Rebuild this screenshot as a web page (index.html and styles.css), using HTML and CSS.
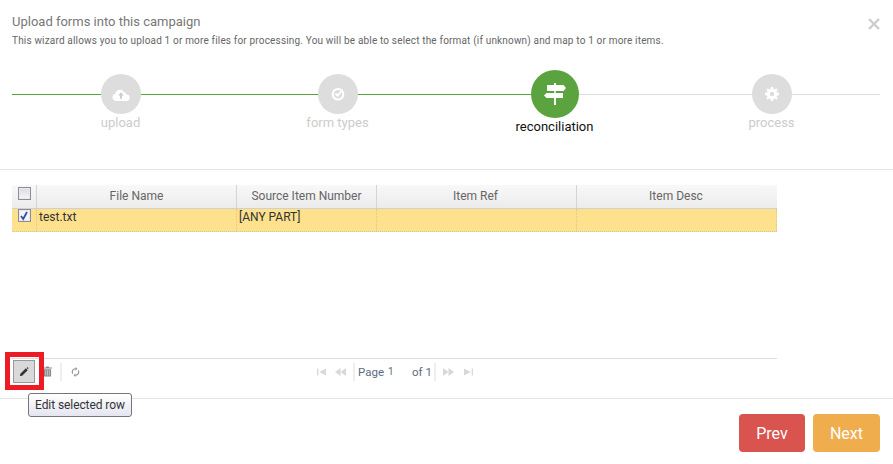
FILE: index.html
```html
<!DOCTYPE html>
<html lang="en">
<head>
<meta charset="utf-8">
<title>Upload forms</title>
<link rel="stylesheet" href="styles.css">
</head>
<body>
<div class="wizard">
  <header class="head">
    <div>
      <h1 class="title">Upload forms into this campaign</h1>
      <p class="sub">This wizard allows you to upload 1 or more files for processing. You will be able to select the format (if unknown) and map to 1 or more items.</p>
    </div>
    <svg class="close" viewBox="0 0 12 12" width="12" height="12"><path d="M1 1l10 10M11 1L1 11" stroke="#ccc" stroke-width="2.4" fill="none"/></svg>
  </header>
  <section class="stepper">
    <div class="track"><div class="track-done"></div></div>
    <div class="step">
      <div class="circle">
        <svg viewBox="0 0 18 13" width="18" height="13"><path d="M4 13A3.700 3.700 0 0 1 3.400 5.700 4.600 4.600 0 0 1 12 4.200 3.200 3.200 0 0 1 14.500 6.600 3.200 3.200 0 0 1 14.500 13Z" fill="#fff"/><path d="M9 4.200L6.200 7.400H8V10.800H10V7.400H11.800Z" fill="#ccc"/></svg>
      </div>
      <div class="label">upload</div>
    </div>
    <div class="step">
      <div class="circle">
        <svg viewBox="0 0 14 14" width="14" height="14"><circle cx="7" cy="7.300" r="5.300" fill="none" stroke="#fff" stroke-width="2"/><path d="M4.500 6.500L6.600 8.600 11.500 3" fill="none" stroke="#fff" stroke-width="1.800"/></svg>
      </div>
      <div class="label">form types</div>
    </div>
    <div class="step step-active">
      <div class="circle">
        <svg viewBox="0 0 22 22" width="22" height="22"><path d="M10 0h2v2h7.500L22 5l-2.500 3H12v2h7v5h-7v7h-2v-7H2.500L0 12.500 2.500 10H10V8H3V2h7z" fill="#fff"/><path d="M3 8.700h16v.6H3z" fill="#5ba33f"/></svg>
      </div>
      <div class="label">reconciliation</div>
    </div>
    <div class="step">
      <div class="circle">
        <svg viewBox="0 0 14 14" width="14" height="14"><path d="M5.800 0h2.400l.3 1.900 1.200.5L11.300 1.300 12.700 2.700 11.600 4.300l.5 1.200L14 5.800v2.400l-1.900.3-.5 1.200 1.100 1.600-1.400 1.400-1.600-1.100-1.200.5L8.200 14H5.800l-.3-1.900-1.200-.5-1.600 1.100-1.400-1.400 1.100-1.600-.5-1.200L0 8.200V5.800l1.900-.3.500-1.200L1.300 2.700 2.700 1.300l1.600 1.100 1.200-.5z M7 4.800a2.200 2.200 0 1 0 0 4.400 2.200 2.200 0 0 0 0-4.400z" fill="#fff" fill-rule="evenodd"/></svg>
      </div>
      <div class="label">process</div>
    </div>
  </section>
  <section class="content">
    <div class="grid">
      <div class="row row-head">
        <div class="cell cell-check"><span class="check"></span></div>
        <div class="cell">File Name</div>
        <div class="cell">Source Item Number</div>
        <div class="cell cell-shift">Item Ref</div>
        <div class="cell cell-shift">Item Desc</div>
      </div>
      <div class="row row-selected">
        <div class="cell cell-check"><span class="check check-on"><svg viewBox="0 0 10 10" width="10" height="10"><path d="M2 5l2.200 3L8 1" fill="none" stroke="#3a4fa0" stroke-width="1.800"/></svg></span></div>
        <div class="cell">test.txt</div>
        <div class="cell">[ANY PART]</div>
        <div class="cell"></div>
        <div class="cell"></div>
      </div>
    </div>
    <div class="pager">
      <div class="tools">
        <button class="edit-btn" type="button">
          <svg viewBox="0 0 12 12" width="11" height="11"><path d="M1 11l.5-2.500L7.500 2.500 9.500 4.500 3.500 10.500Z" fill="#333"/><path d="M9.500 0.800l.4 1 1 .4-1 .4-.4 1-.4-1-1-.4 1-.4z" fill="#333"/></svg>
        </button>
        <svg class="tool-trash" viewBox="0 0 10 11" width="9" height="11"><path d="M3.500 0h3v1H10v1.200H0V1h3.500z M1 3h8v8H1z" fill="#888"/><path d="M3 4v6M5 4v6M7 4v6" stroke="#e4e4e4" stroke-width=".7"/></svg>
        <span class="sep sep-tools"></span>
        <svg class="tool-refresh" viewBox="0 0 12 12" width="11" height="12"><path d="M6 2.500A3.500 3.500 0 0 0 3 8M6 9.500A3.500 3.500 0 0 0 9 4" fill="none" stroke="#888" stroke-width="1.100"/><path d="M6 .5V4.500L8 2.500Z M6 11.500V7.500L4 9.500Z" fill="#888"/></svg>
      </div>
      <div class="paging">
        <svg class="pg-first" viewBox="0 0 10 8" width="9" height="8"><path d="M0 0h1.500v8H0z M10 0v8L2.500 4z" fill="#d8d8d8"/></svg>
        <svg class="pg-prev" viewBox="0 0 11 8" width="11" height="8"><path d="M5.500 0v8L0 4z M11 0v8L5.500 4z" fill="#d8d8d8"/></svg>
        <span class="sep"></span>
        <span class="page-text">Page</span><span class="page-num">1</span><span class="page-of">of 1</span>
        <span class="sep sep-right"></span>
        <svg class="pg-next" viewBox="0 0 11 8" width="11" height="8"><path d="M0 0v8L5.500 4z M5.500 0v8L11 4z" fill="#d8d8d8"/></svg>
        <svg viewBox="0 0 10 8" width="9" height="8"><path d="M0 0v8L7.500 4z M8.500 0H10v8H8.500z" fill="#d8d8d8"/></svg>
      </div>
      <div class="edit-mark"></div>
      <div class="tooltip">Edit selected row</div>
    </div>
  </section>
  <footer class="foot">
    <button class="btn btn-prev" type="button">Prev</button>
    <button class="btn btn-next" type="button">Next</button>
  </footer>
</div>
</body>
</html>
```
FILE: styles.css
```css
* { box-sizing: border-box; }
html, body { margin: 0; height: 100%; background: #fff; overflow: hidden; }
body { font-family: Roboto, "Liberation Sans", sans-serif; color: #777; }
.wizard { width: 893px; height: 464px; display: flex; flex-direction: column; }

.head { height: 70px; padding: 14px 13px 0 12px; display: flex; justify-content: space-between; align-items: flex-start; }
.title { margin: 0; font-size: 13px; line-height: 15px; font-weight: 400; color: #777; }
.sub { margin: 6px 0 0; font-size: 10px; line-height: 12px; font-weight: 400; color: #666; letter-spacing: .17px; }
.close { margin-top: 4px; }

.stepper { position: relative; height: 99px; margin: 0 13px 0 12px; display: grid; grid-template-columns: repeat(4, 1fr); }
.track { position: absolute; left: 0; right: 0; top: 24px; height: 1px; background: #ddd; }
.track-done { width: 519px; height: 1px; background: #5aa33a; }
.step { position: relative; display: flex; flex-direction: column; align-items: center; padding-top: 4px; }
.circle { width: 40px; height: 40px; border-radius: 50%; background: #ddd; display: flex; align-items: center; justify-content: center; }
.label { margin-top: 1px; font-size: 13px; line-height: 16px; color: #ccc; }
.step-active { padding-top: 0; }
.step-active .circle { width: 48px; height: 48px; background: #5ba33f; }
.step-active .label { margin-top: 1px; color: #111; font-size: 13px; }

.content { border-top: 1px solid #e5e5e5; height: 229px; padding: 15px 116px 0 12px; position: relative; }
.grid { height: 173px; }
.row { display: grid; grid-template-columns: 25px 200px 140px 200px 200px; font-size: 12px; }
.cell { padding: 0 2px; overflow: hidden; white-space: nowrap; }
.row-head { height: 24px; line-height: 22px; background: linear-gradient(#f8f8f8, #ececec); border-bottom: 1px solid #d0d0d0; text-align: center; color: #666; }
.row-head .cell { border-right: 1px solid #d4d4d4; }
.row-head .cell:last-child { border-right: 0; }
.row-head .cell-shift { padding-right: 4px; }
.row-selected { height: 23px; line-height: 17px; background: #fde18c; color: #333; border-bottom: 1px dotted #c8c8b0; }
.row-selected .cell { border-right: 1px dotted #d8c88c; }
.cell-check { display: flex; justify-content: center; padding: 2px 0 0; }
.check { width: 13px; height: 13px; border: 1px solid #888c9c; background: linear-gradient(#dcdcdc, #f6f6f6); box-shadow: inset 0 0 0 1px #e8e8ee; display: flex; align-items: center; justify-content: center; }
.row-selected .cell-check { padding: 0; }
.check-on { background: #f4f4f8; }

.pager { position: relative; height: 26px; border-top: 1px solid #ddd; display: flex; align-items: center; font-size: 12px; }
.tools { width: 305px; display: flex; align-items: center; }
.edit-btn { width: 22px; height: 23px; margin-left: 1px; padding: 0; border: 1px solid #999; background: #d9d9d9; display: flex; align-items: center; justify-content: center; }
.tool-trash { margin-left: 8px; }
.sep-tools { margin: 0 8px; }
.sep { width: 2px; height: 18px; background: #eee; flex: none; }
.edit-mark { position: absolute; left: -7px; top: -7px; width: 39px; height: 38px; border: 5px solid #ed1c24; }
.paging { display: flex; align-items: center; color: #5d6b80; }
.pg-first { margin-right: 9px; }
.pg-prev { margin-right: 7px; }
.page-text { margin-left: 3px; width: 30px; font-size: 11.500px; }
.page-num { width: 24px; font-size: 10px; }
.page-of { width: 22px; font-size: 11.500px; }
.sep-right { margin-right: 7px; }
.pg-next { margin-right: 10px; }
.tooltip { position: absolute; left: 16px; top: 34px; height: 24px; padding: 0 6px; line-height: 22px; font-size: 12px; letter-spacing: -.08px; color: #333; background: linear-gradient(#fff, #e4e5f0); border: 1px solid #767676; border-radius: 3px; white-space: nowrap; }

.foot { border-top: 1px solid #e5e5e5; padding: 15px 13px 0 0; display: flex; justify-content: flex-end; gap: 8px; }
.btn { height: 38px; width: 67px; border: 0; border-radius: 4px; color: #fff; font-family: inherit; font-size: 16px; }
.btn-prev { width: 66px; background: #d9534f; }
.btn-next { background: #f0ad4e; }
```
